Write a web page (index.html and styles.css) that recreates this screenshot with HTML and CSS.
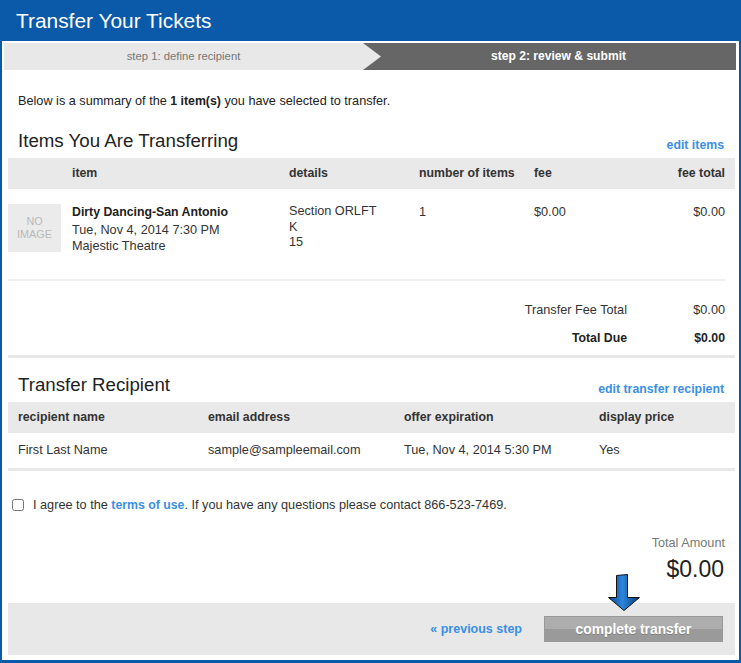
FILE: index.html
```html
<!DOCTYPE html>
<html lang="en">
<head>
    <meta charset="UTF-8">
    <meta name="viewport" content="width=device-width, initial-scale=1.0">
    <title>Transfer Your Tickets</title>
    <link rel="stylesheet" href="styles.css">
</head>
<body>
    <div class="frame">
        <div class="topbar">
            <h1>Transfer Your Tickets</h1>
        </div>
        <div class="panel">
            <!-- step indicator -->
            <div class="steps">
                <div class="step step-done">step 1: define recipient</div>
                <div class="step step-current">step 2: review &amp; submit</div>
            </div>

            <div class="content">
                <p class="intro">Below is a summary of the <b>1 item(s)</b> you have selected to transfer.</p>

                <!-- items -->
                <div class="sec-head">
                    <h2>Items You Are Transferring</h2>
                    <a href="#" class="link">edit items</a>
                </div>
                <div class="items-grid thead">
                    <div></div>
                    <div>item</div>
                    <div>details</div>
                    <div>number of items</div>
                    <div>fee</div>
                    <div class="right">fee total</div>
                </div>
                <div class="items-grid item-row">
                    <div class="noimage">NO<br>IMAGE</div>
                    <div class="item-info">
                        <div class="item-name">Dirty Dancing-San Antonio</div>
                        <div>Tue, Nov 4, 2014 7:30 PM</div>
                        <div>Majestic Theatre</div>
                    </div>
                    <div class="item-details">
                        <div>Section ORLFT</div>
                        <div>K</div>
                        <div>15</div>
                    </div>
                    <div>1</div>
                    <div>$0.00</div>
                    <div class="right">$0.00</div>
                </div>
                <div class="thin-line"></div>

                <div class="totals">
                    <div>Transfer Fee Total</div>
                    <div class="right">$0.00</div>
                    <div class="strong">Total Due</div>
                    <div class="right strong">$0.00</div>
                </div>
                <div class="thick-line"></div>

                <!-- recipient -->
                <div class="sec-head">
                    <h2>Transfer Recipient</h2>
                    <a href="#" class="link">edit transfer recipient</a>
                </div>
                <div class="rcpt-grid thead">
                    <div>recipient name</div>
                    <div>email address</div>
                    <div>offer expiration</div>
                    <div>display price</div>
                </div>
                <div class="rcpt-grid rcpt-row">
                    <div>First Last Name</div>
                    <div>sample@sampleemail.com</div>
                    <div>Tue, Nov 4, 2014 5:30 PM</div>
                    <div>Yes</div>
                </div>
                <div class="thick-line"></div>

                <label class="agree">
                    <input type="checkbox">
                    <span>I agree to the <a href="#" class="link">terms of use</a>. If you have any questions please contact 866-523-7469.</span>
                </label>

                <div class="total-label">Total Amount</div>
                <div class="total-amount">$0.00</div>

                <div class="footer">
                    <a href="#" class="link">&laquo; previous step</a>
                    <div class="btn-wrap">
                        <svg class="pointer" width="34" height="40" viewBox="0 0 34 40">
                            <defs>
                                <linearGradient id="arrowFill" x1="0" y1="0" x2="1" y2="0">
                                    <stop offset="0" stop-color="#0b4590"/>
                                    <stop offset="0.45" stop-color="#2a86dc"/>
                                    <stop offset="1" stop-color="#093a78"/>
                                </linearGradient>
                            </defs>
                            <path d="M9.5 3.5 L20.5 2.5 L20.5 25.5 L32.5 25.5 L17 38.5 L1.5 25.5 L9.5 25.5 Z" fill="url(#arrowFill)" stroke="#111" stroke-width="1"/>
                        </svg>
                        <button type="button" class="btn">complete transfer</button>
                    </div>
                </div>
            </div>
        </div>
    </div>
</body>
</html>
```

FILE: styles.css
```css
*{
    box-sizing: border-box;
}
body{
    margin: 0;
    font-family: "Liberation Sans", Arial, sans-serif;
    font-size: 12.7px;
    color: #222;
}
b, .link, .thead, .item-name, .strong{
    font-size: 12.3px;
}
.frame{
    width: 741px;
    height: 663px;
    background-color: #0a5aa9;
    padding: 0 2px 3px 2px;
    display: flex;
    flex-direction: column;
}
.topbar{
    height: 41px;
    padding-left: 14px;
}
.topbar h1{
    margin: 0;
    font-size: 20.9px;
    font-weight: normal;
    line-height: 41px;
    color: #fff;
}
.panel{
    flex: 1;
    background-color: #fff;
    padding-bottom: 5px;
}

/* steps */
.steps{
    display: flex;
    height: 27px;
    margin: 2px 3px 0 2px;
    background-color: #666;
    line-height: 27px;
    font-size: 11.3px;
}
.step-done{
    width: 377px;
    padding-right: 18px;
    text-align: center;
    color: #777;
    background-color: #e8e8e8;
    clip-path: polygon(0 0, 359px 0, 100% 50%, 359px 100%, 0 100%);
}
.step-current{
    flex: 1;
    text-align: center;
    color: #fff;
    font-weight: bold;
    font-size: 12.1px;
}

.content{
    padding: 0 4px 0 6px;
}
.intro{
    margin: 23px 0 0 10px;
    line-height: 16px;
}
.link{
    color: #3b8fe3;
    font-weight: bold;
    text-decoration: none;
}
.right{
    text-align: right;
}
.sec-head{
    display: flex;
    justify-content: space-between;
    align-items: baseline;
    height: 22px;
    margin-top: 20px;
    padding: 0 10px;
}
.sec-head h2{
    margin: 0;
    font-size: 18.7px;
    font-weight: normal;
    line-height: 22px;
    position: relative;
    top: 1px;
}
.sec-head .link{
    position: relative;
    top: 3px;
    right: 1px;
}
.thead{
    margin-top: 7px;
    height: 31px;
    line-height: 31px;
    background-color: #e9e9e9;
    font-weight: bold;
    color: #333;
}

/* items table */
.items-grid{
    display: grid;
    grid-template-columns: 64px 217px 130px 115px 1fr 110px;
}
.items-grid > .right{
    padding-right: 10px;
}
.item-row{
    height: 90px;
    padding-top: 15px;
    line-height: 16px;
    color: #333;
}
.noimage{
    width: 53px;
    height: 48px;
    background-color: #ebebeb;
    color: #b9b9b9;
    font-size: 10.8px;
    line-height: 13px;
    text-align: center;
    padding-top: 11px;
}
.item-name{
    font-weight: bold;
    color: #222;
    margin-bottom: 2px;
}
.item-details{
    line-height: 15.5px;
}
.thin-line{
    height: 2px;
    margin-right: 10px;
    background-color: #eeeeee;
}
.totals{
    display: grid;
    grid-template-columns: 1fr 98px;
    margin: 15px 0 3px;
    padding-right: 10px;
    line-height: 28px;
    text-align: right;
    color: #333;
}
.totals .strong{
    font-weight: bold;
    color: #222;
}
.thick-line{
    height: 3px;
    background-color: #e8e8e8;
}
.thick-line + .sec-head{
    margin-top: 15px;
}

/* recipient table */
.rcpt-grid{
    display: grid;
    grid-template-columns: 190px 196px 195px 1fr;
    padding-left: 10px;
}
.rcpt-row{
    height: 35px;
    line-height: 35px;
    color: #333;
}

.agree{
    display: flex;
    align-items: center;
    margin-top: 26px;
    line-height: 16px;
    color: #333;
}
.agree input{
    width: 12px;
    height: 12px;
    margin: 0 9px 0 4px;
}
.total-label{
    margin-top: 22px;
    padding-right: 10px;
    text-align: right;
    line-height: 16px;
    color: #777;
}
.total-amount{
    margin-top: 4px;
    padding-right: 11px;
    text-align: right;
    font-size: 23px;
    line-height: 28px;
    color: #222;
}

/* footer */
.footer{
    display: flex;
    justify-content: flex-end;
    align-items: center;
    height: 52px;
    margin-top: 20px;
    padding-right: 12px;
    background-color: #e8e8e8;
}
.footer > .link{
    font-size: 12.5px;
}
.btn-wrap{
    position: relative;
    margin-left: 22px;
}
.btn{
    display: block;
    width: 179px;
    height: 26px;
    border: 1px solid #999;
    background: linear-gradient(#adadad 0, #adadad 50%, #9a9a9a 50%, #9a9a9a 100%);
    color: #fff;
    font-family: "Liberation Sans", Arial, sans-serif;
    font-size: 13.8px;
    font-weight: bold;
    text-shadow: 0 1px 0 rgba(0, 0, 0, 0.2);
}
.pointer{
    position: absolute;
    left: 63px;
    top: -44px;
}
```
